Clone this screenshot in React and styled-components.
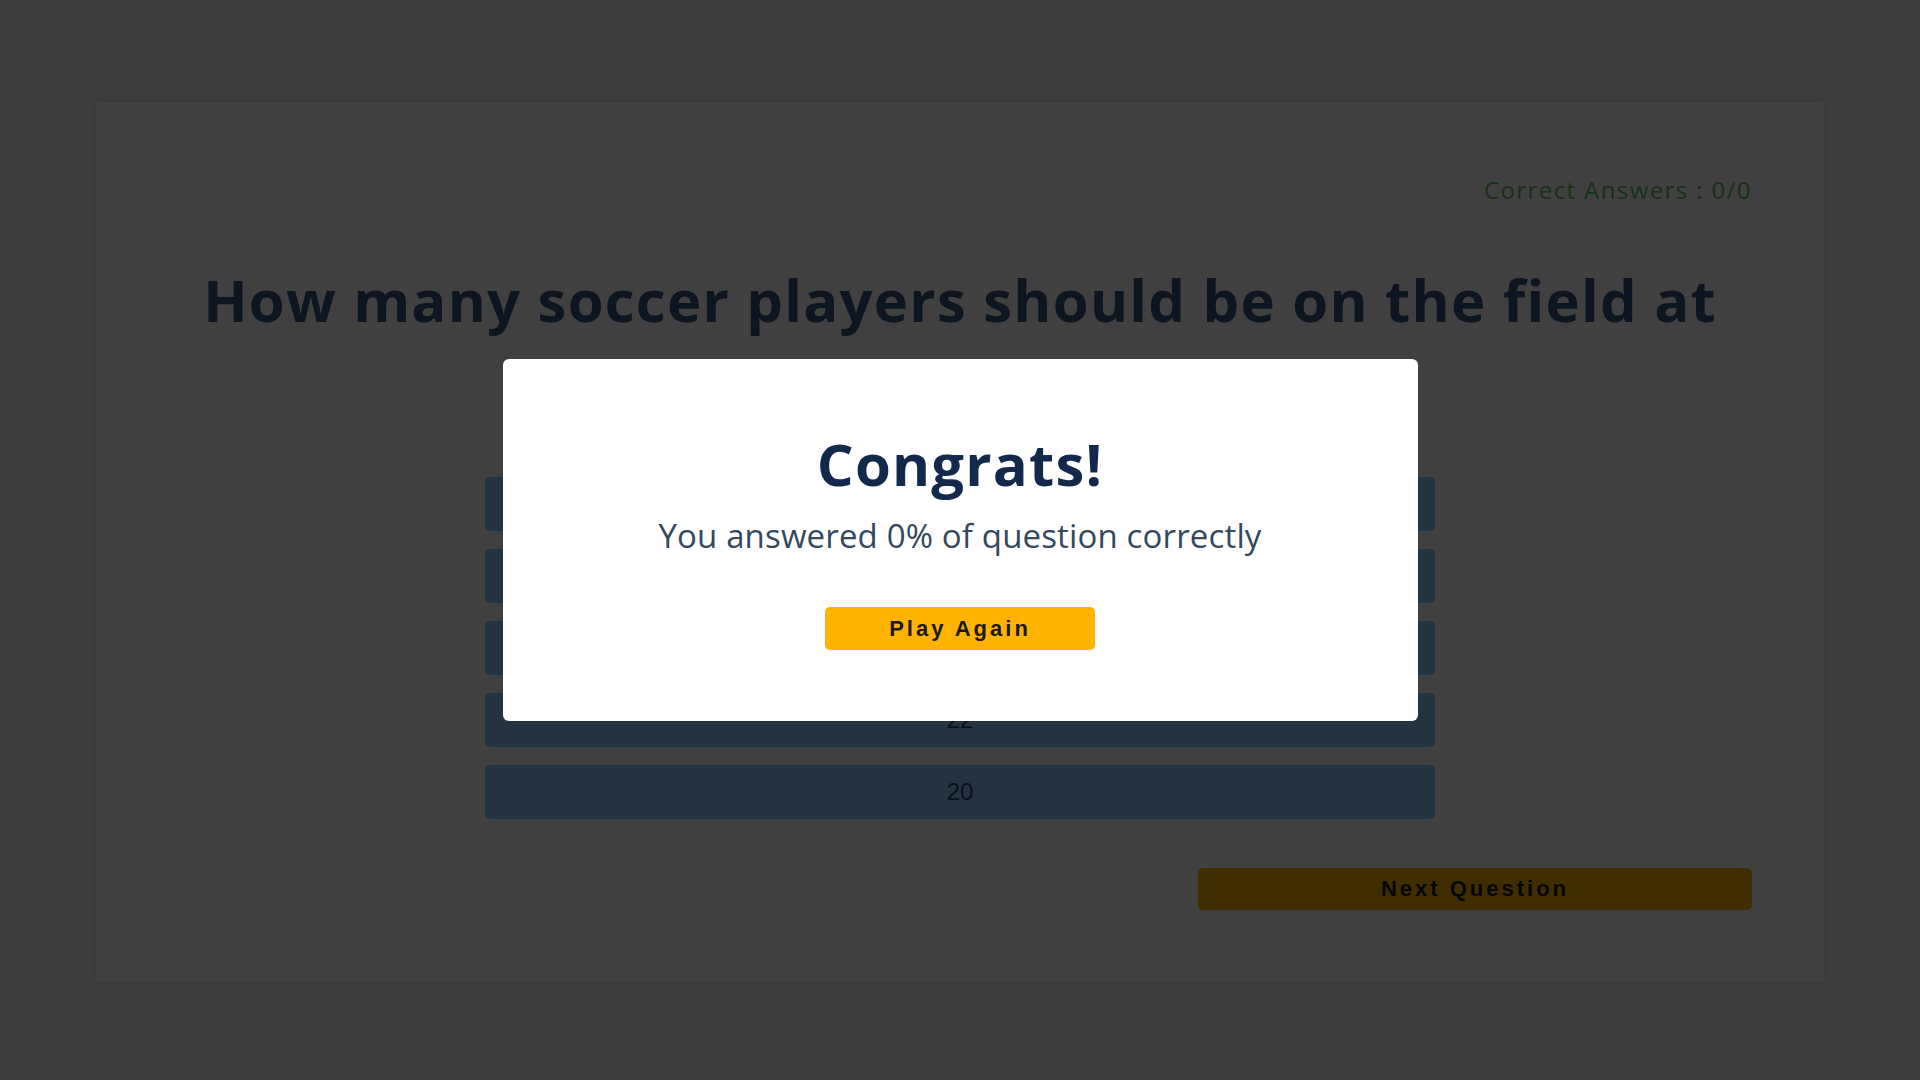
import React from 'react'
import styled, { createGlobalStyle } from 'styled-components'

const GlobalStyle = createGlobalStyle`
  html, body {
    margin: 0;
    padding: 0;
    background: #f0f4fc;
    font-family: 'Open Sans', 'Noto Sans', sans-serif;
  }
  * {
    box-sizing: border-box;
  }
`

export const QuizCard = styled.div`
  margin: 102px 96px 100px;
  min-height: 880px;
  padding: 71px 72px 70px;
  background: #ffffff;
  box-shadow: 0 0 10px rgba(0, 0, 0, 0.12);
  display: flex;
  flex-direction: column;
`
export const ScoreLine = styled.div`
  align-self: flex-end;
  font-size: 24px;
  letter-spacing: 1.4px;
  color: #5cb85c;
  line-height: normal;
`
export const Question = styled.h1`
  margin: 53px 0 0;
  text-align: center;
  font-size: 58px;
  font-weight: 700;
  line-height: 1.4;
  letter-spacing: 1.25px;
  color: #305480;
`
export const AnswerList = styled.div`
  margin: 56px auto 0;
  width: 950px;
  display: flex;
  flex-direction: column;
  gap: 18px;
`
export const AnswerButton = styled.button`
  height: 54px;
  border: none;
  border-radius: 5px;
  background: #8fcbff;
  color: #24405c;
  font-family: 'Liberation Sans', Arial, sans-serif;
  font-size: 24px;
  cursor: pointer;
`
export const Footer = styled.div`
  margin-top: 49px;
  display: flex;
  justify-content: flex-end;
`
export const YellowButton = styled.button`
  width: ${p => p.$width};
  height: ${p => p.$height};
  border: none;
  border-radius: 5px;
  background: #ffb300;
  color: #1a1a1a;
  font-family: 'Liberation Sans', Arial, sans-serif;
  font-size: 22px;
  font-weight: 700;
  letter-spacing: 3px;
  cursor: pointer;
`

export const Overlay = styled.div`
  position: fixed;
  inset: 0;
  background: rgba(0, 0, 0, 0.75);
  display: flex;
  align-items: center;
  justify-content: center;
`
export const Modal = styled.div`
  width: 915px;
  padding: 70px 0 71px;
  background: #ffffff;
  border-radius: 6px;
  display: flex;
  flex-direction: column;
  align-items: center;
`
export const ModalTitle = styled.h2`
  margin: 0;
  font-size: 58px;
  font-weight: 700;
  line-height: 1.2;
  letter-spacing: 1.2px;
  color: #13294b;
`
export const ModalText = styled.p`
  margin: 17px 0 0;
  font-size: 33px;
  line-height: 1.3;
  letter-spacing: 0.15px;
  color: #34495e;
`
export const ModalActions = styled.div`
  margin-top: 49px;
`

const answers = ['11', '9', '10', '22', '20']

export default function App() {
  return (
    <>
      <GlobalStyle />
      <QuizCard>
        <ScoreLine>Correct Answers : 0/0</ScoreLine>
        <Question>How many soccer players should be on the field at the same time?</Question>
        <AnswerList>
          {answers.map(a => (
            <AnswerButton key={a}>{a}</AnswerButton>
          ))}
        </AnswerList>
        <Footer>
          <YellowButton $width="554px" $height="42px">Next Question</YellowButton>
        </Footer>
      </QuizCard>
      <Overlay>
        <Modal>
          <ModalTitle>Congrats!</ModalTitle>
          <ModalText>You answered 0% of question correctly</ModalText>
          <ModalActions>
            <YellowButton $width="270px" $height="43px">Play Again</YellowButton>
          </ModalActions>
        </Modal>
      </Overlay>
    </>
  )
}
